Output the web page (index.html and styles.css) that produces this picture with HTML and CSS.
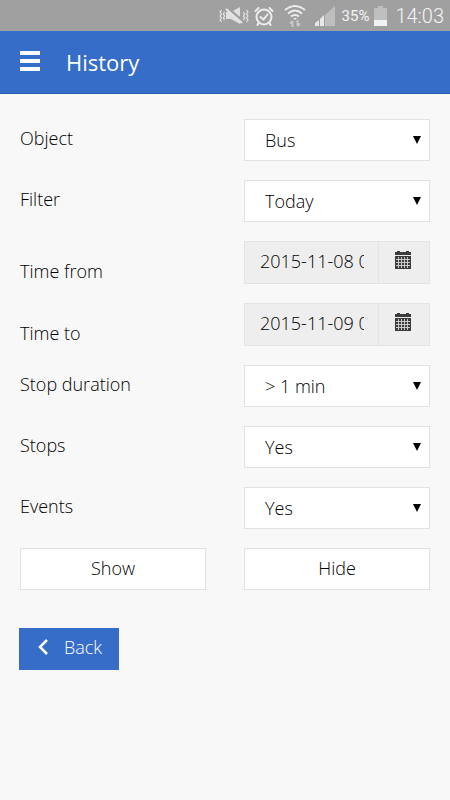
FILE: index.html
```html
<!DOCTYPE html>
<html lang="en">
<head>
<meta charset="utf-8">
<meta name="viewport" content="width=device-width, initial-scale=1">
<title>History</title>
<link rel="stylesheet" href="styles.css">
</head>
<body>
<div class="status">
  <svg width="30" height="20" viewBox="0 0 30 20" fill="none" stroke="#e6e6e6" stroke-width="1.5" aria-hidden="true">
    <path d="M2.500 4l-1.500 2 1.500 2-1.500 2 1.500 2-1.500 2 1.500 2M5.500 6l-1 2 1 2-1 2 1 2M27.500 4l1.500 2-1.500 2 1.500 2-1.500 2 1.500 2-1.500 2M24.500 6l1 2-1 2 1 2-1 2" stroke-width="1.2"/>
    <path d="M7 6h5l9-5v17l-9-5H7z" fill="#e0e0e0" stroke="none"/>
    <path d="M8 2l15 12.500" stroke="#a0a0a0" stroke-width="3"/>
    <path d="M7 3l16 14" stroke-width="2"/>
  </svg>
  <svg width="20" height="20" viewBox="0 0 20 20" fill="none" stroke="#ececec" stroke-width="2" stroke-linecap="round" aria-hidden="true">
    <circle cx="10" cy="11" r="7.500"/><path d="M6.500 11l3 2.500 4-5M1.500 5l3-3M15.500 2l3 3M4.500 17l-1 2M15.500 17l1 2"/>
  </svg>
  <svg class="wifi" width="22" height="22" viewBox="0 0 22 22" fill="none" stroke="#ececec" stroke-width="2" aria-hidden="true">
    <path d="M1 5q10-8 20 0M4 8.500q7-6 14 0M7 11.500q4-3 8 0"/><path d="M9 13h4l-2 2z" fill="#ececec" stroke="none"/>
    <path d="M8.500 22v-6M6 18.500l2.500-2.500M13.500 15v6M16 18.500l-2.500 2.500" stroke="#c8c8c8"/>
  </svg>
  <svg class="signal" width="20" height="20" viewBox="0 0 20 20" aria-hidden="true">
    <path d="M0 20v-3l4-3v6zM5 20v-7l4-4v11z" fill="#e8e8e8"/><path d="M10 20V9l10-9v20z" fill="#bebebe"/>
  </svg>
  <span class="percent">35%</span>
  <svg width="13" height="20" viewBox="0 0 13 20" aria-hidden="true">
    <path d="M0 2h4V0h5v2h4v18H0z" fill="#bfbfbf"/><path d="M0 14h13v6H0z" fill="#f2f2f2"/>
  </svg>
  <time class="clock">14:03</time>
</div>
<header class="bar">
  <button class="menu" type="button" aria-label="Menu">
    <svg width="20" height="20" viewBox="0 0 20 20" aria-hidden="true"><path d="M0 0h20v4H0zM0 8h20v4H0zM0 16h20v4H0z" fill="#fff"/></svg>
  </button>
  <h1 class="title">History</h1>
</header>
<main class="content">
  <form class="form">
    <label for="object">Object</label>
    <div class="pick"><select id="object"><option>Bus</option></select></div>
    <label for="filter">Filter</label>
    <div class="pick"><select id="filter"><option>Today</option></select></div>
    <label class="low" for="from">Time from</label>
    <div class="date">
      <input id="from" type="text" value="2015-11-08 00:00" readonly>
      <button type="button" aria-label="Choose start date"><svg width="18" height="18" viewBox="0 0 18 18" aria-hidden="true"><path d="M1 1h2V0h3v1h6V0h3v1h2v3H1zM1 5h16v13H1z" fill="#3c3c3c"/><path d="M2 8.500h14M2 11.500h14M2 14.500h14M4.500 6v11M7.500 6v11M10.500 6v11M13.500 6v11" stroke="#c9c9c9"/></svg></button>
    </div>
    <label class="low" for="to">Time to</label>
    <div class="date">
      <input id="to" type="text" value="2015-11-09 00:00" readonly>
      <button type="button" aria-label="Choose end date"><svg width="18" height="18" viewBox="0 0 18 18" aria-hidden="true"><path d="M1 1h2V0h3v1h6V0h3v1h2v3H1zM1 5h16v13H1z" fill="#3c3c3c"/><path d="M2 8.500h14M2 11.500h14M2 14.500h14M4.500 6v11M7.500 6v11M10.500 6v11M13.500 6v11" stroke="#c9c9c9"/></svg></button>
    </div>
    <label for="duration">Stop duration</label>
    <div class="pick"><select id="duration"><option>&gt; 1 min</option></select></div>
    <label for="stops">Stops</label>
    <div class="pick"><select id="stops"><option>Yes</option></select></div>
    <label for="events">Events</label>
    <div class="pick"><select id="events"><option>Yes</option></select></div>
    <button class="action" type="button">Show</button>
    <button class="action" type="button">Hide</button>
  </form>
  <button class="back" type="button">
    <svg width="10" height="16" viewBox="0 0 10 16" fill="none" stroke="#fff" stroke-width="2.500" aria-hidden="true"><path d="M9 1L2 8l7 7"/></svg>
    Back
  </button>
</main>
</body>
</html>
```
FILE: styles.css
```css
* {
  box-sizing: border-box;
}

body {
  margin: 0;
  background: #f8f8f8;
  color: #000;
  font: 300 18px/24px "Open Sans", "Noto Sans", sans-serif;
}

button,
input,
select {
  margin: 0;
  border-radius: 0;
  color: inherit;
  font: inherit;
}

.status {
  display: flex;
  align-items: center;
  justify-content: flex-end;
  gap: 5px;
  height: 31px;
  padding-right: 6px;
  background: #a0a0a0;
  color: #f4f4f4;
  font-family: Roboto, sans-serif;
}

.wifi {
  margin-left: 5px;
}

.signal {
  margin-left: 4px;
}

.percent {
  margin-left: 2px;
  font-size: 15px;
  font-weight: 400;
}

.clock {
  margin-left: 3px;
  font-size: 20px;
}

.bar {
  display: flex;
  align-items: center;
  gap: 26px;
  height: 63px;
  padding: 0 20px;
  border-bottom: 1px solid #2c5cae;
  background: #366dc8;
  color: #fff;
}

.menu {
  display: flex;
  padding: 0 0 3px;
  border: 0;
  background: none;
}

.title {
  margin: 0;
  font-size: 22px;
  font-weight: 400;
}

.content {
  padding: 25px 20px;
}

.form {
  display: grid;
  grid-template-columns: repeat(2, minmax(0, 1fr));
  gap: 19px 38px;
}

.form label {
  padding-top: 7px;
}

.form .low {
  padding-top: 18px;
}

.pick {
  position: relative;
  height: 42px;
}

.pick::after {
  content: "";
  position: absolute;
  top: 17px;
  right: 9px;
  border: solid transparent;
  border-width: 8px 4px 0;
  border-top-color: #000;
  pointer-events: none;
}

.pick select {
  width: 100%;
  height: 100%;
  padding: 0 20px 1px;
  border: 1px solid #e2e2e2;
  background: #fff;
  appearance: none;
}

.date {
  display: flex;
  height: 43px;
  border: 1px solid #e4e4e4;
  background: #eee;
}

.date input {
  flex: 1;
  min-width: 0;
  padding: 0 14px 4px 15px;
  border: 0;
  background: none;
}

.date button {
  display: flex;
  align-items: center;
  justify-content: center;
  width: 51px;
  padding: 0 2px 5px 0;
  border: 0;
  border-left: 1px solid #e4e4e4;
  background: none;
}

.action {
  height: 42px;
  padding: 0 0 3px;
  border: 1px solid #e2e2e2;
  background: #fff;
}

.back {
  display: flex;
  align-items: center;
  gap: 16px;
  height: 42px;
  margin: 38px 0 0 -1px;
  padding: 0 17px 4px 19px;
  border: 0;
  background: #366dc8;
  color: #fff;
}
```
